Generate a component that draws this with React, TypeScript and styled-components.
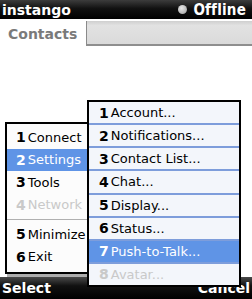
import React from "react";
import styled, { createGlobalStyle } from "styled-components";

const Global = createGlobalStyle`
  html, body { margin: 0; padding: 0; background: #fff; }
  body { font-family: "DejaVu Sans", Verdana, sans-serif; }
  * { box-sizing: border-box; }
`;

const Screen = styled.div`
  position: relative;
  width: 252px;
  height: 299px;
  overflow: hidden;
  display: flex;
  flex-direction: column;
  background: #fff;
`;

const TopBar = styled.div`
  height: 19px;
  flex: none;
  display: flex;
  align-items: center;
  justify-content: space-between;
  padding: 0 6px 0 2px;
  background: linear-gradient(#3c3c3c 0%, #111 45%, #000 100%);
  color: #fff;
`;

const Brand = styled.span`
  font-family: "DejaVu Sans", sans-serif;
  font-weight: bold;
  font-size: 14px;
`;

const Status = styled.div`
  display: flex;
  align-items: center;
  gap: 6px;
`;

const Dot = styled.span`
  width: 9px;
  height: 9px;
  border-radius: 50%;
  background: radial-gradient(circle at 40% 35%, #e8e8e8, #9a9a9a);
`;

const StatusText = styled.span`
  font-family: "DejaVu Sans Condensed", "DejaVu Sans", sans-serif;
  font-weight: bold;
  font-size: 15px;
  letter-spacing: 0.2px;
`;

const TabRow = styled.div`
  height: 27px;
  flex: none;
  display: flex;
  background: #fff;
`;

const Tab = styled.div`
  width: 86px;
  display: flex;
  align-items: center;
  padding: 2px 0 0 8px;
  background: #fff;
  color: #7a7a7a;
  font-weight: bold;
  font-size: 14px;
`;

const TabFill = styled.div`
  flex: 1;
  margin-top: 2px;
  background: linear-gradient(#cfcfcf, #e2e2e2 20%, #dadada);
  border-left: 1px solid #8a8a8a;
  border-bottom: 2px solid #8e8e8e;
`;

const Body = styled.div`
  flex: 1;
  background: #fff;
`;

const BottomBar = styled.div`
  height: 22px;
  flex: none;
  display: flex;
  align-items: center;
  justify-content: space-between;
  padding: 0 2px;
  background: linear-gradient(#4a4a4a 0%, #111 40%, #000 100%);
  color: #fff;
  font-weight: bold;
  font-size: 14px;
`;

const Menu = styled.div`
  position: absolute;
  left: 5px;
  top: 122px;
  width: 100px;
  padding: 2px 0 4px;
  background: #fcfcfc;
  border: 2px solid #000;
  box-shadow: 2px 3px 0 rgba(120, 120, 120, 0.6);
`;

const Item = styled.div<{ $active?: boolean; $disabled?: boolean }>`
  height: 22.5px;
  display: flex;
  align-items: center;
  padding-left: 9px;
  white-space: nowrap;
  font-size: 13px;
  background: ${(p) => (p.$active ? "#5f94e6" : "transparent")};
  color: ${(p) => (p.$disabled ? "#c9c9c9" : p.$active ? "#fff" : "#000")};
`;

const Num = styled.span`
  font-weight: bold;
  font-size: 14px;
  margin-right: 2px;
`;

const Sep = styled.div`
  height: 1px;
  margin: 3px 0;
  background: #b0b0b0;
`;

const SubMenu = styled.div`
  position: absolute;
  left: 87px;
  top: 100px;
  width: 154px;
  height: 187px;
  display: flex;
  flex-direction: column;
  background: #f3f6fb;
  border: 2px solid #000;
`;

const SubItem = styled.div<{ $first?: boolean; $active?: boolean; $disabled?: boolean }>`
  flex: 1;
  display: flex;
  align-items: center;
  padding-left: 10px;
  font-size: 13px;
  white-space: nowrap;
  border-top: ${(p) => (p.$first ? "none" : "2px solid #7d9ddb")};
  background: ${(p) => (p.$active ? "#5f94e6" : "#f3f6fb")};
  color: ${(p) => (p.$disabled ? "#c9c9c9" : p.$active ? "#fff" : "#000")};
`;

const mainItems = [
  { n: "1", t: "Connect" },
  { n: "2", t: "Settings", active: true },
  { n: "3", t: "Tools" },
  { n: "4", t: "Network", disabled: true, sepAfter: true },
  { n: "5", t: "Minimize" },
  { n: "6", t: "Exit" },
];

const subItems = [
  { n: "1", t: "Account..." },
  { n: "2", t: "Notifications..." },
  { n: "3", t: "Contact List..." },
  { n: "4", t: "Chat..." },
  { n: "5", t: "Display..." },
  { n: "6", t: "Status..." },
  { n: "7", t: "Push-to-Talk...", active: true },
  { n: "8", t: "Avatar...", disabled: true },
];

export default function App() {
  return (
    <>
      <Global />
      <Screen>
        <TopBar>
          <Brand>instango</Brand>
          <Status>
            <Dot />
            <StatusText>Offline</StatusText>
          </Status>
        </TopBar>
        <TabRow>
          <Tab>Contacts</Tab>
          <TabFill />
        </TabRow>
        <Body />
        <BottomBar>
          <span>Select</span>
          <span>Cancel</span>
        </BottomBar>

        <Menu>
          {mainItems.map((it) => (
            <React.Fragment key={it.n}>
              <Item $active={it.active} $disabled={it.disabled}>
                <Num>{it.n}</Num>
                {it.t}
              </Item>
              {it.sepAfter && <Sep />}
            </React.Fragment>
          ))}
        </Menu>

        <SubMenu>
          {subItems.map((it, i) => (
            <SubItem key={it.n} $first={i === 0} $active={it.active} $disabled={it.disabled}>
              <Num>{it.n}</Num>
              {it.t}
            </SubItem>
          ))}
        </SubMenu>
      </Screen>
    </>
  );
}
